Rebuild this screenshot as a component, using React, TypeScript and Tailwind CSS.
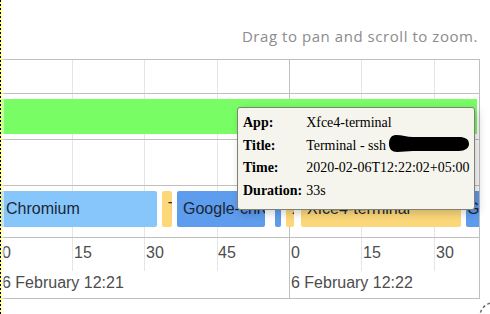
import React from "react";

type Item = { left: number; width: number; bg: string; text: string; pad: string };

const items: Item[] = [
  { left: 0, width: 157, bg: "bg-[#87c6fb]", text: "Chromium", pad: "pl-[6px]" },
  { left: 162, width: 10, bg: "bg-[#fcd87a]", text: "Terminal", pad: "pl-[6px]" },
  { left: 177, width: 88, bg: "bg-[#5e9ced]", text: "Google-chrome", pad: "pl-[6px]" },
  { left: 275, width: 6, bg: "bg-[#5e9ced]", text: "", pad: "pl-[6px]" },
  { left: 286, width: 8, bg: "bg-[#fcd87a]", text: "Xfce4-terminal", pad: "pl-[6px]" },
  { left: 301, width: 160, bg: "bg-[#fcd87a]", text: "Xfce4-terminal", pad: "pl-[6px]" },
  { left: 466, width: 30, bg: "bg-[#5e9ced]", text: "Google-chrome", pad: "pl-[1px]" },
];

const minor = [72, 144, 217, 361, 434];
const minorLabels = [
  { x: 2, t: "0" },
  { x: 74, t: "15" },
  { x: 146, t: "30" },
  { x: 218, t: "45" },
  { x: 291, t: "0" },
  { x: 363, t: "15" },
  { x: 436, t: "30" },
];

export default function App() {
  return (
    <div className="relative w-[490px] h-[314px] overflow-hidden bg-white">
      {/* header */}
      <div className="h-[59px] flex justify-end pr-[12px] pt-[27px]">
        <span className="text-[15px] leading-[18px] tracking-[0.55px] text-[#8c8c8c] [font-family:'Open_Sans',sans-serif]">
          Drag to pan and scroll to zoom.
        </span>
      </div>

      {/* timeline panel */}
      <div className="relative w-[480px] overflow-hidden border-t border-r border-b border-[#bfbfbf] [font-family:'Liberation_Sans',Arial,sans-serif]">
        {/* grid lines */}
        {minor.map((x) => (
          <div
            key={x}
            className="absolute top-0 h-[211px] w-px bg-[#e5e5e5]"
            style={{ left: x }}
          />
        ))}
        <div className="absolute top-0 bottom-0 left-[289px] w-px bg-[#bfbfbf]" />

        <div className="relative h-[34px] border-b border-[#bfbfbf]" />
        <div className="relative h-[46px] border-b border-[#bfbfbf]">
          <div className="absolute left-0 top-[5px] h-[35px] w-[477px] bg-[#78fe64]" />
        </div>
        <div className="relative h-[46px] border-b border-[#bfbfbf]" />
        <div className="relative h-[52px] border-b border-[#bfbfbf]">
          {items.map((it, i) => (
            <div
              key={i}
              className={`absolute top-[5px] h-[36px] rounded-[2px] overflow-hidden flex items-center whitespace-nowrap text-[16px] text-[#1b2636] ${it.pad} ${it.bg}`}
              style={{ left: it.left, width: it.width }}
            >
              {it.text}
            </div>
          ))}
        </div>
        <div className="relative h-[60px] text-[16px] text-[#4d4d4d]">
          {minorLabels.map((l, i) => (
            <div
              key={i}
              className="absolute top-[7px] leading-[16px] whitespace-nowrap"
              style={{ left: l.x }}
            >
              {l.t}
            </div>
          ))}
          <div className="absolute top-[37px] left-[2px] leading-[16px] whitespace-nowrap">
            6 February 12:21
          </div>
          <div className="absolute top-[37px] left-[291px] leading-[16px] whitespace-nowrap">
            6 February 12:22
          </div>
        </div>
      </div>

      {/* tooltip */}
      <div className="absolute left-[237px] top-[107px] w-[238px] h-[103px] bg-[#f5f4ed] border border-[#808074] rounded-[3px] shadow-[3px_3px_10px_rgba(0,0,0,0.2)] pl-[5px] pt-[4px] text-[14px] leading-[22.5px] text-black [font-family:'Liberation_Serif','Times_New_Roman',serif]">
        <div className="grid grid-cols-[auto_1fr] gap-x-[4px] whitespace-nowrap">
          <b>App:</b>
          <span>Xfce4-terminal</span>
          <b>Title:</b>
          <span>
            Terminal - ssh
            <svg
              width="80"
              height="18"
              viewBox="0 0 80 18"
              className="inline-block align-[-3px] ml-[3px]"
            >
              <path
                d="M7 0 C2 0 0 4 0 9 C0 14 3 17 8 17 C14 17 18 16 24 16 L70 16 C76 16 80 13 80 9 C80 4 76 2 70 2 L24 2 C18 2 13 0 7 0 Z"
                fill="#000"
              />
            </svg>
          </span>
          <b>Time:</b>
          <span>2020-02-06T12:22:02+05:00</span>
          <b>Duration:</b>
          <span>33s</span>
        </div>
      </div>

      {/* focus outline strip */}
      <div className="absolute left-0 top-0 h-full w-[1px] bg-[repeating-linear-gradient(to_bottom,#000_0px,#000_2px,#ffff40_2px,#ffff40_4px)]" />
      <div className="absolute left-[1px] top-0 h-full w-[3px] bg-[#fafad2] opacity-60" />

      {/* spinner */}
      <svg
        className="absolute left-[476px] top-[298px]"
        width="30"
        height="30"
        viewBox="0 0 30 30"
      >
        <circle
          cx="17"
          cy="18"
          r="13"
          fill="none"
          stroke="#6a6a6a"
          strokeWidth="1.5"
          strokeDasharray="3 2.5"
        />
      </svg>
    </div>
  );
}
